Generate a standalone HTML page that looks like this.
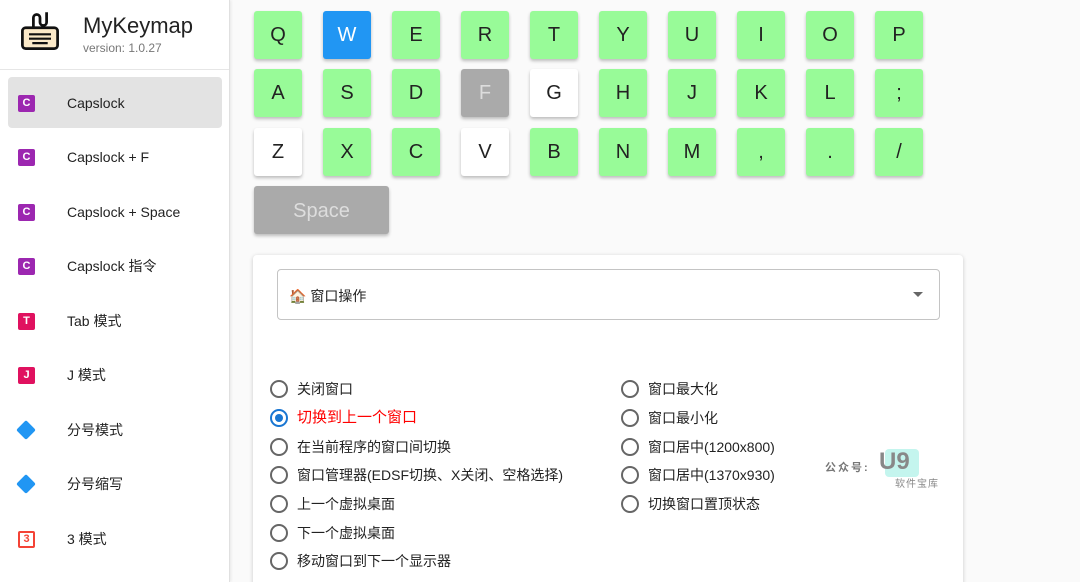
<!DOCTYPE html>
<html><head><meta charset="utf-8"><style>
*{box-sizing:border-box;margin:0;padding:0}
html,body{width:1080px;height:582px;overflow:hidden}
body{background:#fafafa;font-family:"Liberation Sans","Noto Sans CJK SC",sans-serif;position:relative;color:#222}
.side{position:absolute;left:0;top:0;width:230px;height:582px;background:#fff;border-right:1px solid #e0e0e0;box-shadow:1px 0 3px rgba(0,0,0,.08)}
.hdr{height:70px;border-bottom:1px solid #e6e6e6;position:relative}
.title{position:absolute;left:83px;top:13px;font-size:22px;color:#222}
.ver{position:absolute;left:83px;top:41px;font-size:12px;color:#777}
.item{position:absolute;left:8px;width:214px;height:51px;border-radius:4px;font-size:14px;color:#222}
.item span.t{position:absolute;left:59px;top:50%;transform:translateY(-50%)}
.ic{position:absolute;left:10px;top:50%;margin-top:-8px;width:17px;height:17px;border-radius:2px;color:#fff;font-size:11px;font-weight:bold;text-align:center;line-height:17px}
.dia{position:absolute;left:11px;top:50%;margin-top:-7px;width:14px;height:14px;background:#2196f3;transform:rotate(45deg);border-radius:2px}
.key{position:absolute;width:48px;height:48px;border-radius:3px;background:#98fb98;box-shadow:0 2px 3px rgba(0,0,0,.25);font-size:20px;text-align:center;line-height:48px;color:#222}
.card{position:absolute;left:253px;top:255px;width:710px;height:340px;background:#fff;border-radius:4px;box-shadow:0 1px 4px rgba(0,0,0,.2)}
.sel{position:absolute;left:24px;top:14px;width:663px;height:51px;border:1px solid #c4c4c4;border-radius:4px;font-size:14px}
.r{position:absolute;font-size:14px;color:#222;height:20px;line-height:20px}
.r i{position:absolute;left:-27px;top:1px;width:18px;height:18px;border:2px solid #666;border-radius:50%}
</style></head><body>
<div class="side">
 <div class="hdr">
  <svg style="position:absolute;left:19px;top:9px" width="42" height="44" viewBox="0 0 38 40"><path d="M13 18V8a3 3 0 0 1 6 0v4a3 3 0 0 0 6 0V3" fill="none" stroke="#111" stroke-width="2.5"/><rect x="3" y="17" width="32" height="19" rx="3" fill="#fbe9c8" stroke="#111" stroke-width="2.5"/><path d="M9 23h20M9 27h20M12 31h14" stroke="#111" stroke-width="2"/></svg>
  <div class="title">MyKeymap</div><div class="ver">version: 1.0.27</div>
 </div>
 <div class="item" style="top:77px;background:#e3e3e3"><div class="ic" style="background:#9c27b0">C</div><span class="t">Capslock</span></div>
 <div class="item" style="top:131px"><div class="ic" style="background:#9c27b0">C</div><span class="t">Capslock + F</span></div>
 <div class="item" style="top:186px"><div class="ic" style="background:#9c27b0">C</div><span class="t">Capslock + Space</span></div>
 <div class="item" style="top:240px"><div class="ic" style="background:#9c27b0">C</div><span class="t">Capslock 指令</span></div>
 <div class="item" style="top:295px"><div class="ic" style="background:#e0115f">T</div><span class="t">Tab 模式</span></div>
 <div class="item" style="top:349px"><div class="ic" style="background:#e0115f">J</div><span class="t">J 模式</span></div>
 <div class="item" style="top:404px"><div class="dia"></div><span class="t">分号模式</span></div>
 <div class="item" style="top:458px"><div class="dia"></div><span class="t">分号缩写</span></div>
 <div class="item" style="top:513px"><div class="ic" style="background:#fff;border:2px solid #f44336;color:#f44336;line-height:13px">3</div><span class="t">3 模式</span></div>
</div>

<div class="key" style="left:254px;top:11px">Q</div>
<div class="key" style="left:323px;top:11px;background:#2196f3;color:#fff">W</div>
<div class="key" style="left:392px;top:11px">E</div>
<div class="key" style="left:461px;top:11px">R</div>
<div class="key" style="left:530px;top:11px">T</div>
<div class="key" style="left:599px;top:11px">Y</div>
<div class="key" style="left:668px;top:11px">U</div>
<div class="key" style="left:737px;top:11px">I</div>
<div class="key" style="left:806px;top:11px">O</div>
<div class="key" style="left:875px;top:11px">P</div>
<div class="key" style="left:254px;top:69px">A</div>
<div class="key" style="left:323px;top:69px">S</div>
<div class="key" style="left:392px;top:69px">D</div>
<div class="key" style="left:461px;top:69px;background:#aaa;color:#ddd">F</div>
<div class="key" style="left:530px;top:69px;background:#fff">G</div>
<div class="key" style="left:599px;top:69px">H</div>
<div class="key" style="left:668px;top:69px">J</div>
<div class="key" style="left:737px;top:69px">K</div>
<div class="key" style="left:806px;top:69px">L</div>
<div class="key" style="left:875px;top:69px">;</div>
<div class="key" style="left:254px;top:128px;background:#fff">Z</div>
<div class="key" style="left:323px;top:128px">X</div>
<div class="key" style="left:392px;top:128px">C</div>
<div class="key" style="left:461px;top:128px;background:#fff">V</div>
<div class="key" style="left:530px;top:128px">B</div>
<div class="key" style="left:599px;top:128px">N</div>
<div class="key" style="left:668px;top:128px">M</div>
<div class="key" style="left:737px;top:128px">,</div>
<div class="key" style="left:806px;top:128px">.</div>
<div class="key" style="left:875px;top:128px">/</div>
<div class="key" style="left:254px;top:186px;width:135px;background:#aaa;color:#ddd;line-height:50px">Space</div>

<div class="card">
 <div class="sel"><span style="position:absolute;left:11px;top:16px">🏠 窗口操作</span><span style="position:absolute;right:16px;top:22px;width:0;height:0;border-left:5px solid transparent;border-right:5px solid transparent;border-top:5px solid #666"></span></div>
 <div class="r" style="left:44px;top:124px"><i></i>关闭窗口</div>
 <div class="r" style="left:44px;top:153px;color:#f00;font-size:15px"><i style="border-color:#1976d2"><b style="position:absolute;left:3px;top:3px;width:8px;height:8px;border-radius:50%;background:#1976d2"></b></i>切换到上一个窗口</div>
 <div class="r" style="left:44px;top:182px"><i></i>在当前程序的窗口间切换</div>
 <div class="r" style="left:44px;top:210px"><i></i>窗口管理器(EDSF切换、X关闭、空格选择)</div>
 <div class="r" style="left:44px;top:239px"><i></i>上一个虚拟桌面</div>
 <div class="r" style="left:44px;top:268px"><i></i>下一个虚拟桌面</div>
 <div class="r" style="left:44px;top:296px"><i></i>移动窗口到下一个显示器</div>
 <div class="r" style="left:395px;top:124px"><i></i>窗口最大化</div>
 <div class="r" style="left:395px;top:153px"><i></i>窗口最小化</div>
 <div class="r" style="left:395px;top:182px"><i></i>窗口居中(1200x800)</div>
 <div class="r" style="left:395px;top:210px"><i></i>窗口居中(1370x930)</div>
 <div class="r" style="left:395px;top:239px"><i></i>切换窗口置顶状态</div>
 <div style="position:absolute;left:572px;top:204px;font-size:11px;color:#777;font-weight:bold;letter-spacing:2px">公众号:</div>
 <div style="position:absolute;left:632px;top:194px;width:34px;height:28px;background:#c4f5ee;border-radius:4px"></div>
 <div style="position:absolute;left:626px;top:194px;font-size:24px;font-weight:bold;color:#888;line-height:26px">U9</div>
 <div style="position:absolute;left:642px;top:220px;font-size:10px;color:#888;letter-spacing:1px">软件宝库</div>
</div>
</body></html>
